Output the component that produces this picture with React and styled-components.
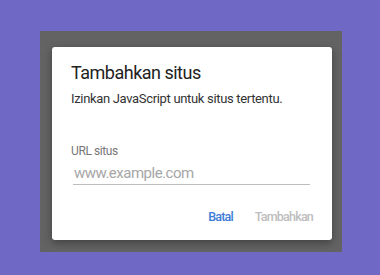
import React from "react";
import styled, { createGlobalStyle } from "styled-components";

const Global = createGlobalStyle`
  html, body { margin: 0; padding: 0; background: #6f68c4; }
  body { font-family: Roboto, "Noto Sans", sans-serif; }
  * { box-sizing: border-box; }
`;

const Page = styled.div`
  width: 380px;
  height: 275px;
  padding: 31px 0 0 40px;
`;

const Scrim = styled.div`
  width: 302px;
  height: 221px;
  background: #636363;
  padding: 16px 10px 0 12px;
`;

const Dialog = styled.div`
  width: 280px;
  height: 193px;
  background: #fff;
  border-radius: 3px;
  box-shadow: 0 3px 8px rgba(0, 0, 0, 0.35);
  padding: 14px 19px 0 19px;
  display: flex;
  flex-direction: column;
`;

const Title = styled.div`
  font-size: 18px;
  line-height: 24px;
  letter-spacing: -0.5px;
  color: #222;
`;

const Subtitle = styled.div`
  margin-top: 4px;
  font-size: 13px;
  line-height: 20px;
  letter-spacing: -0.33px;
  color: #333;
`;

const Label = styled.div`
  margin-top: 34px;
  font-size: 12px;
  line-height: 16px;
  letter-spacing: -0.4px;
  color: #777;
`;

const Input = styled.input`
  margin: 4px 3px 0 2px;
  padding: 0 0 1px 1px;
  border: none;
  border-bottom: 1px solid #bdbdbd;
  outline: none;
  font-family: inherit;
  font-size: 15px;
  line-height: 20px;
  letter-spacing: -0.5px;
  height: 22px;
  color: #333;
  background: transparent;
  &::placeholder { color: #a6a6a6; }
`;

const Actions = styled.div`
  margin-top: 24px;
  display: flex;
  justify-content: flex-end;
  gap: 22px;
`;

const Button = styled.button`
  border: none;
  background: none;
  padding: 0;
  font-family: inherit;
  font-size: 12.5px;
  line-height: 16px;
  font-weight: 500;
  letter-spacing: -0.8px;
  color: ${(p) => (p.$disabled ? "#bdbdbd" : "#3c7bd6")};
`;

export default function App() {
  return (
    <>
      <Global />
      <Page>
        <Scrim>
          <Dialog>
            <Title>Tambahkan situs</Title>
            <Subtitle>Izinkan JavaScript untuk situs tertentu.</Subtitle>
            <Label>URL situs</Label>
            <Input placeholder="www.example.com" />
            <Actions>
              <Button>Batal</Button>
              <Button $disabled>Tambahkan</Button>
            </Actions>
          </Dialog>
        </Scrim>
      </Page>
    </>
  );
}
